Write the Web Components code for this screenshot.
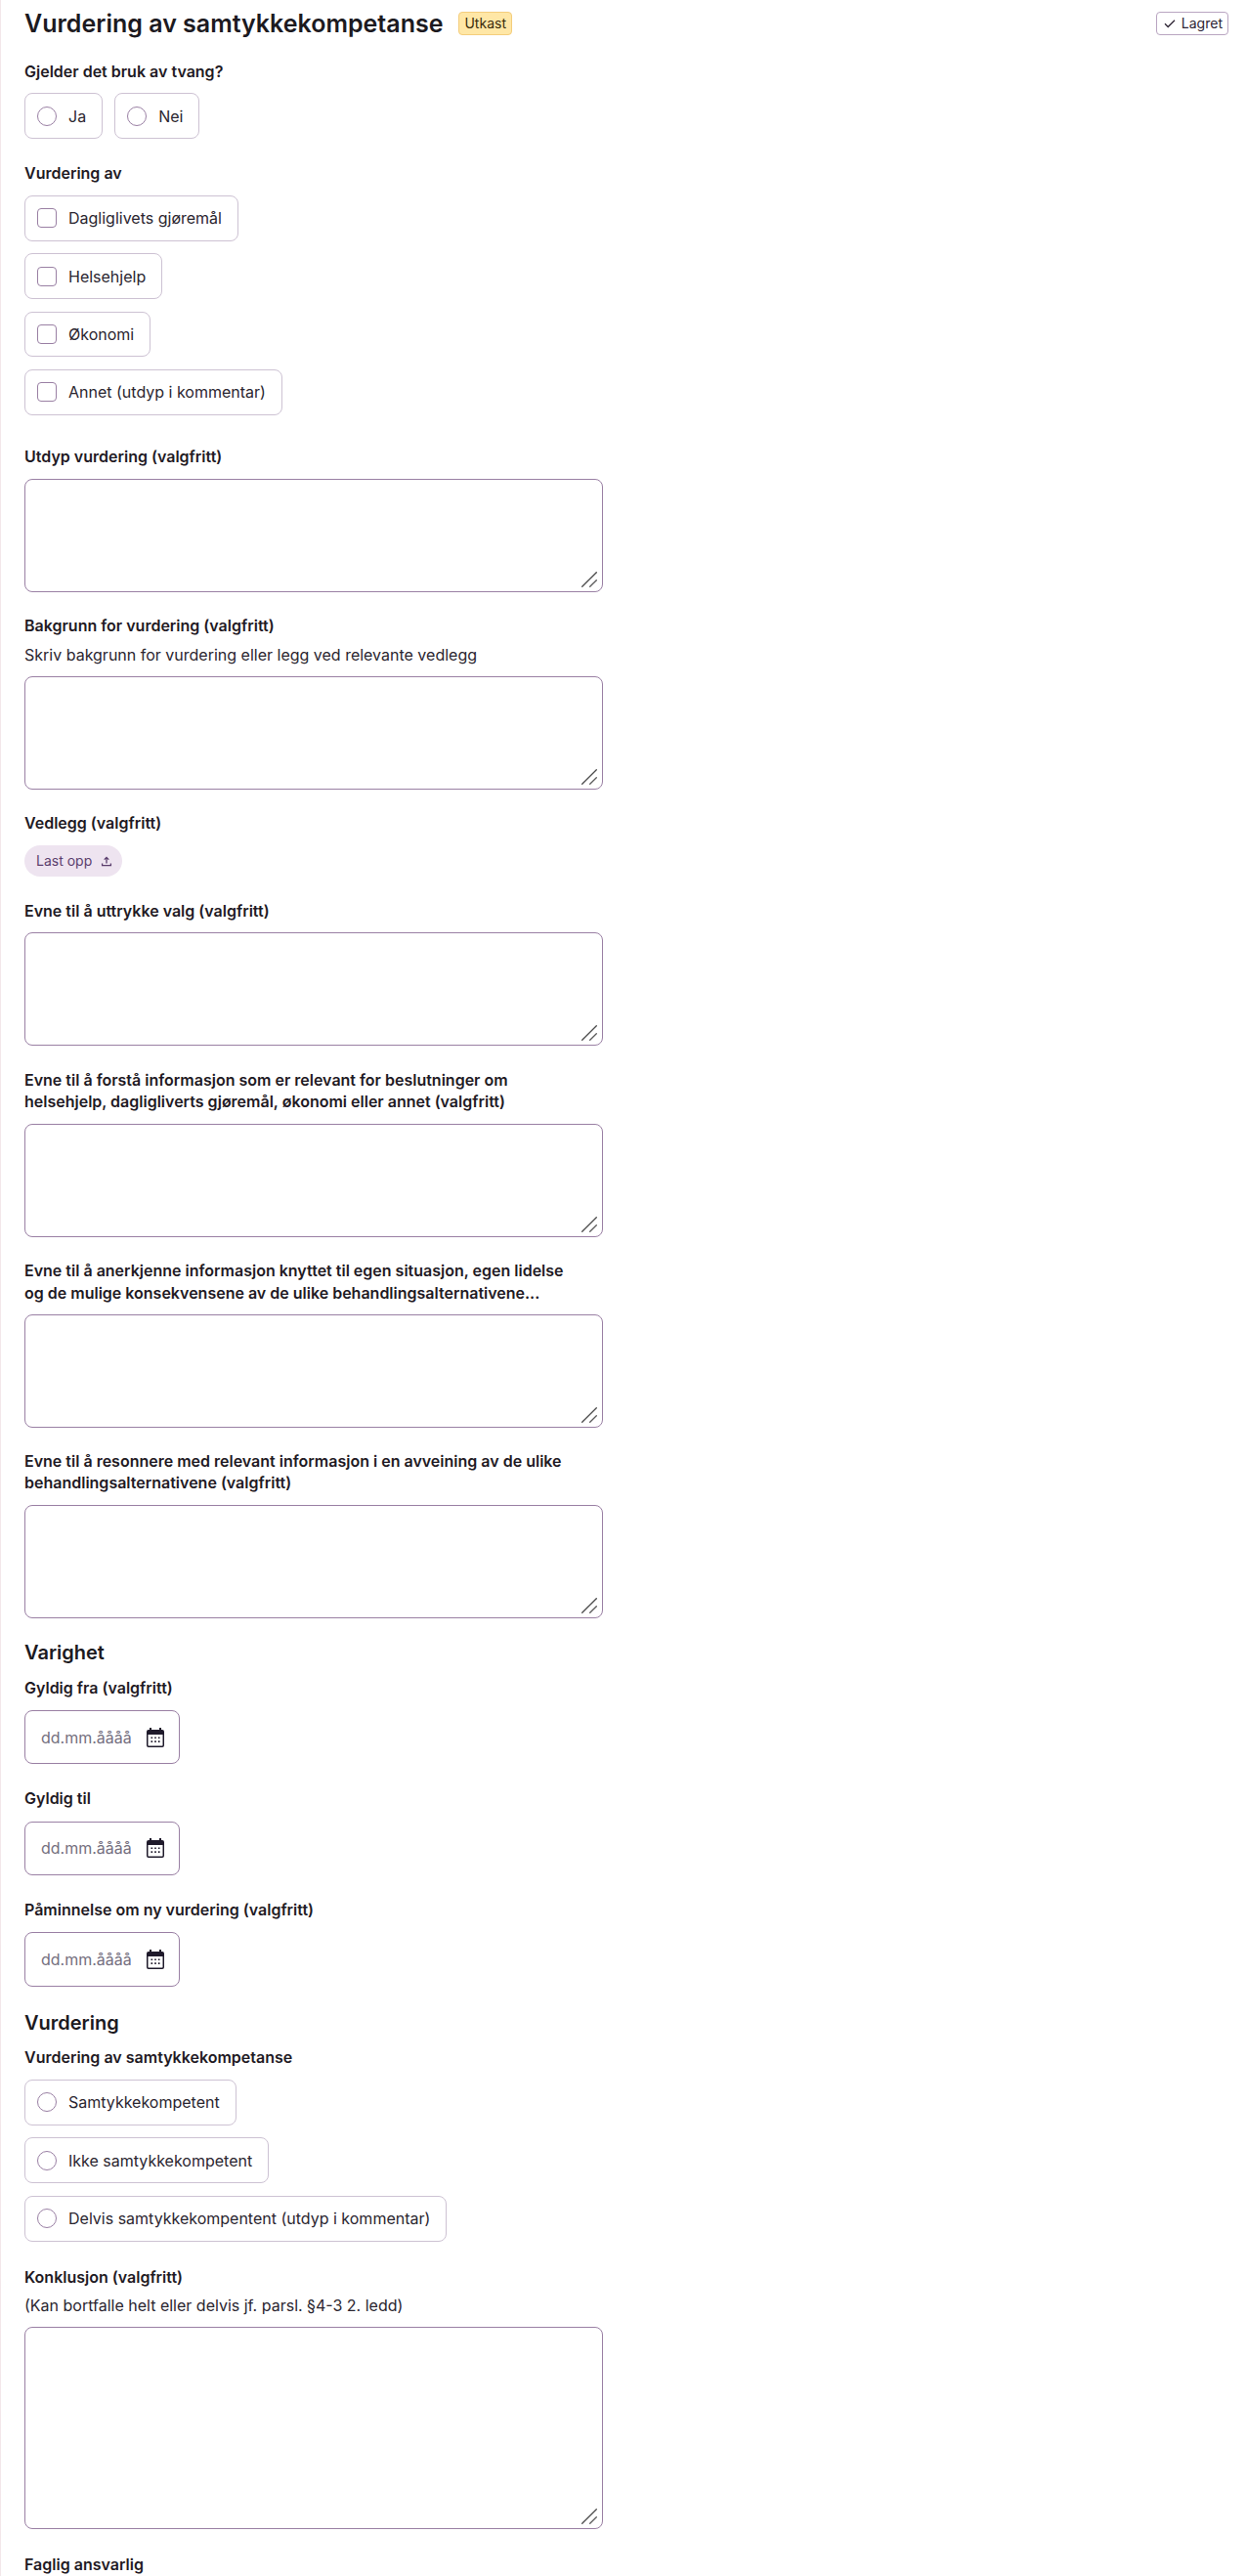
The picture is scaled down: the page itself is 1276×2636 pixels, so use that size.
<!DOCTYPE html>
<html lang="no"><head><meta charset="utf-8"><title>Vurdering av samtykkekompetanse</title>
<style>
html,body{margin:0;padding:0;background:#fff;overflow:hidden}
body{font-family:Inter,"Noto Sans",sans-serif;color:#1f1a24;height:2636px}
</style></head><body>
<vk-page>
  <vk-header title-text="Vurdering av samtykkekompetanse" badge="Utkast" saved="Lagret"></vk-header>

  <vk-group label="Gjelder det bruk av tvang?" row top="13.5">
    <vk-choice type="radio">Ja</vk-choice><vk-choice type="radio">Nei</vk-choice>
  </vk-group>
  <vk-group label="Vurdering av" top="24">
    <vk-choice type="checkbox">Dagliglivets gjøremål</vk-choice>
    <vk-choice type="checkbox">Helsehjelp</vk-choice>
    <vk-choice type="checkbox">Økonomi</vk-choice>
    <vk-choice type="checkbox">Annet (utdyp i kommentar)</vk-choice>
  </vk-group>

  <vk-text label="Utdyp vurdering (valgfritt)" top="31.6"></vk-text>
  <vk-text label="Bakgrunn for vurdering (valgfritt)" hint="Skriv bakgrunn for vurdering eller legg ved relevante vedlegg"></vk-text>
  <vk-upload label="Vedlegg (valgfritt)" text="Last opp"></vk-upload>
  <vk-text label="Evne til å uttrykke valg (valgfritt)" top="23.8"></vk-text>
  <vk-text label="Evne til å forstå informasjon som er relevant for beslutninger om helsehjelp, dagligliverts gjøremål, økonomi eller annet (valgfritt)"></vk-text>
  <vk-text label="Evne til å anerkjenne informasjon knyttet til egen situasjon, egen lidelse og de mulige konsekvensene av de ulike behandlingsalternativene..."></vk-text>
  <vk-text label="Evne til å resonnere med relevant informasjon i en avveining av de ulike behandlingsalternativene (valgfritt)" top="22.6"></vk-text>

  <vk-heading top="21.8">Varighet</vk-heading>
  <vk-date label="Gyldig fra (valgfritt)" top="10.3"></vk-date>
  <vk-date label="Gyldig til"></vk-date>
  <vk-date label="Påminnelse om ny vurdering (valgfritt)"></vk-date>

  <vk-heading top="23.4">Vurdering</vk-heading>
  <vk-group label="Vurdering av samtykkekompetanse" top="10">
    <vk-choice type="radio">Samtykkekompetent</vk-choice>
    <vk-choice type="radio">Ikke samtykkekompetent</vk-choice>
    <vk-choice type="radio">Delvis samtykkekompentent (utdyp i kommentar)</vk-choice>
  </vk-group>
  <vk-text label="Konklusjon (valgfritt)" hint="(Kan bortfalle helt eller delvis jf. parsl. §4-3 2. ledd)" rows="big" top="25"></vk-text>
  <vk-group label="Faglig ansvarlig" top="25"></vk-group>
</vk-page>
<script>
const labelCss=`.label{display:block;font:600 16px/22.4px Inter,"Noto Sans",sans-serif;color:#1f1a24;max-width:562px}
.hint{font:400 16px/22.4px Inter,"Noto Sans",sans-serif;color:#2b2630;margin:7px 0 1.2px}`;
const esc=s=>(s||'').replace(/&/g,'&amp;').replace(/"/g,'&quot;').replace(/</g,'&lt;');
const mt=(el,d)=>el.hasAttribute('top')?el.getAttribute('top'):d;
function def(name,render){customElements.define(name,class extends HTMLElement{connectedCallback(){if(this.shadowRoot)return;this.attachShadow({mode:'open'}).innerHTML=render(this)}})}

def('vk-page',()=>`<style>:host{display:block;height:2636px;box-sizing:border-box;border-left:1px solid #f3e7ea;padding:0 19px 0 24px;overflow:hidden}</style><slot></slot>`);

def('vk-header',el=>`<style>
:host{display:block;height:48px}
.bar{display:flex;align-items:center;height:48px}
h1{margin:0;font:600 25px/32px Inter,"Noto Sans",sans-serif;color:#1c1a1f}
.badge{margin-left:16px;height:24px;box-sizing:border-box;border:1px solid #f4cd7c;border-radius:4px;background:#ffe7a6;font:400 14px/22px Inter,"Noto Sans",sans-serif;color:#3a2c0a;padding:0 5px}
.saved{margin-left:auto;height:24px;box-sizing:border-box;border:1px solid #b9a5c1;border-radius:4px;display:flex;align-items:center;gap:4px;padding:0 5px;font:400 14px/22px Inter,"Noto Sans",sans-serif;color:#2e2535;background:#fff}
svg{display:block}
</style><div class="bar"><h1>${esc(el.getAttribute('title-text'))}</h1><span class="badge">${esc(el.getAttribute('badge'))}</span>
<span class="saved"><svg width="16" height="16" viewBox="0 0 16 16" fill="none" stroke="#2e2535" stroke-width="1.3"><path d="M3 8.3l3.2 3.2L13 4.8"/></svg>${esc(el.getAttribute('saved'))}</span></div>`);

def('vk-group',el=>`<style>:host{display:block;margin-top:${mt(el,22)}px}
${labelCss}
.items{display:flex;flex-direction:${el.hasAttribute('row')?'row':'column'};align-items:flex-start;gap:${el.hasAttribute('row')?12:12.6}px;margin-top:11.4px}
</style><span class="label">${esc(el.getAttribute('label'))}</span><div class="items"><slot></slot></div>`);

def('vk-choice',el=>{const r=el.getAttribute('type')==='radio';return `<style>
:host{display:flex;align-items:center;gap:12px;box-sizing:border-box;height:46.8px;padding:0 16px 0 12px;border:1px solid #cdc2d3;border-radius:8px;background:#fff;font:400 16px/24px Inter,"Noto Sans",sans-serif;color:#2b2630}
.m{width:20px;height:20px;box-sizing:border-box;border:1px solid #9a80a4;border-radius:${r?'50%':'4px'};flex:none}
</style><span class="m"></span><span><slot></slot></span>`});

def('vk-text',el=>{const big=el.getAttribute('rows')==='big';const h=el.getAttribute('hint');return `<style>:host{display:block;margin-top:${mt(el,23.6)}px}
${labelCss}
.wrap{position:relative;margin-top:11px;width:592px}
textarea{display:block;width:592px;height:${big?207:116}px;box-sizing:border-box;border:1px solid #9a80a4;border-radius:8px;background:#fff;padding:8px 12px;outline:none;resize:none;font:400 16px/24px Inter,sans-serif}
svg{position:absolute;right:6px;bottom:5px;display:block;pointer-events:none}
</style><label class="label">${esc(el.getAttribute('label'))}</label>${h?`<div class="hint">${esc(h)}</div>`:''}<div class="wrap"><textarea aria-label="${esc(el.getAttribute('label'))}"></textarea><svg width="16" height="16" viewBox="0 0 16 16" fill="none" stroke-linecap="round"><path d="M.7 15.3L15.3.7" stroke="#4a4a4a" stroke-width="1.3"/><path d="M8.7 15.3l6.6-6.6" stroke="#5a5a5a" stroke-width="1.3"/></svg></div>`});

def('vk-upload',el=>`<style>:host{display:block;margin-top:22.8px}
${labelCss}
.btn{margin-top:11.8px;display:flex;width:fit-content;align-items:center;gap:8px;height:32px;box-sizing:border-box;padding:0 9px 0 12px;border-radius:16px;background:#eee4f0;font:400 14px/20px Inter,"Noto Sans",sans-serif;color:#5c3f6e}
svg{display:block}
</style><span class="label">${esc(el.getAttribute('label'))}</span><span class="btn">${esc(el.getAttribute('text'))}<svg width="14" height="14" viewBox="0 0 14 14" fill="none" stroke="#5c3f6e" stroke-width="1.3"><path d="M7 9.6V3.4M4.7 5.6L7 3.3l2.3 2.3M2.6 9.4v2.2h8.8V9.4"/></svg></span>`);

def('vk-heading',el=>`<style>:host{display:block;margin-top:${mt(el,22)}px;font:600 20px/28px Inter,"Noto Sans",sans-serif;color:#1c1a1f}</style><slot></slot>`);

def('vk-date',el=>`<style>:host{display:block;margin-top:${mt(el,24)}px}
${labelCss}
.input{margin-top:11.8px;width:159px;height:55.5px;box-sizing:border-box;border:1px solid #9a80a4;border-radius:8px;background:#fff;display:flex;align-items:center;justify-content:space-between;padding:0 15px 0 16px;font:400 16px/24px Inter,"Noto Sans",sans-serif;color:#757080}
svg{display:block}
</style><span class="label">${esc(el.getAttribute('label'))}</span><div class="input"><span>dd.mm.åååå</span>
<svg width="18" height="20" viewBox="0 0 18 20"><path fill-rule="evenodd" fill="#1f1a2b" d="M3 0h2v2h8V0h2v2h1a2 2 0 0 1 2 2v14a2 2 0 0 1-2 2H2a2 2 0 0 1-2-2V4a2 2 0 0 1 2-2h1V0zM1.5 7v11c0 .3.2.5.5.5h14c.3 0 .5-.2.5-.5V7h-15z"/><path fill="#1f1a2b" d="M4.5 9.5h1.6v1.6H4.5zM8.2 9.5h1.6v1.6H8.2zM11.9 9.5h1.6v1.6h-1.6zM4.5 13.3h1.6v1.6H4.5zM8.2 13.3h1.6v1.6H8.2zM11.9 13.3h1.6v1.6h-1.6z"/></svg></div>`);
</script></body></html>
